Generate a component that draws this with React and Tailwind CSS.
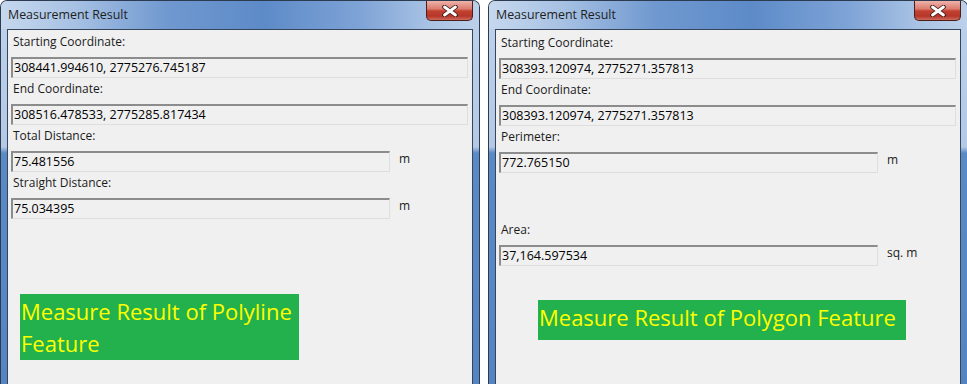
import React from 'react';

const FONT = "font-['Open_Sans',sans-serif]";

function CloseButton() {
    return (
        <div className="absolute top-0 right-[6px] w-[47px] h-[20px] rounded-b-[5px] border border-t-0 border-[#4a1f1a] bg-[linear-gradient(to_bottom,#eeb3ab_0%,#dc7b6d_42%,#c2412f_52%,#b5372a_80%,#d06a5c_100%)] flex items-center justify-center">
            <svg width="16" height="12" viewBox="0 0 16 12">
                <path d="M2.5 2 L13.5 10 M13.5 2 L2.5 10" stroke="#3b1a16" strokeWidth="4.6" strokeLinecap="round" />
                <path d="M2.5 2 L13.5 10 M13.5 2 L2.5 10" stroke="#ffffff" strokeWidth="2.8" strokeLinecap="round" />
            </svg>
        </div>
    );
}

function Field({ label, value, unit, className = '' }) {
    return (
        <div className={className}>
            <div className="h-[22px] flex items-center pl-[5px] text-[12px] text-[#1b1b1b]">{label}</div>
            <div className="mt-[4px] flex items-start">
                <div
                    className={`h-[21px] ml-[3px] border-t-2 border-l-2 border-b border-r border-t-[#8c8c8c] border-l-[#8c8c8c] border-b-[#dedede] border-r-[#dedede] bg-[#f0f0f0] flex items-center pl-[1px] text-[12.5px] text-black ${unit ? 'w-[379px]' : 'w-[457px]'}`}
                >
                    {value}
                </div>
                {unit && <span className="ml-[9px] text-[12px] leading-[16px] text-[#1b1b1b]">{unit}</span>}
            </div>
        </div>
    );
}

function Window({ children }) {
    return (
        <div className={`relative w-[480px] h-[384px] shrink-0 flex flex-col rounded-t-[7px] border border-b-0 border-[#2c3b50] bg-[linear-gradient(to_bottom,#bdd1ea_0px,#b3c9e6_146px,#5a8ac6_152px,#5584c2_100%)] ${FONT}`}>
            {/* Title bar */}
            <div className="h-[28px] shrink-0 rounded-t-[6px] flex items-center pl-[7px] text-[12.4px] text-[#1e1e1e] bg-[linear-gradient(to_right,#c6d8ee_0%,#a8c2e4_15%,#6f98cf_35%,#5d8bc8_55%,#7ea3d6_75%,#a9c3e4_90%,#bcd0ea_100%)]">
                Measurement Result
            </div>
            <CloseButton />
            {/* Content panel */}
            <div className="flex-1 mx-[6px] border border-b-0 border-[#34455c] bg-[#f0f0f0] pt-[1px]">
                {children}
            </div>
        </div>
    );
}

export default function App() {
    return (
        <div className="w-[967px] h-[384px] overflow-hidden bg-white flex gap-[8px]">
            <Window>
                <Field label="Starting Coordinate:" value="308441.994610, 2775276.745187" />
                <Field label="End Coordinate:" value="308516.478533, 2775285.817434" />
                <Field label="Total Distance:" value="75.481556" unit="m" />
                <Field label="Straight Distance:" value="75.034395" unit="m" />
                <div className="mt-[75px] ml-[12px] w-[279px] h-[66px] bg-[#22b14c] pt-[1px] pl-[1px] text-[22px] leading-[32px] text-[#ffff00]">
                    Measure Result of Polyline<br />Feature
                </div>
            </Window>
            <Window>
                <Field label="Starting Coordinate:" value="308393.120974, 2775271.357813" className="mt-[1px]" />
                <Field label="End Coordinate:" value="308393.120974, 2775271.357813" />
                <Field label="Perimeter:" value="772.765150" unit="m" />
                <Field label="Area:" value="37,164.597534" unit="sq. m" className="mt-[46px]" />
                <div className="mt-[34px] ml-[42px] w-[368px] h-[40px] bg-[#22b14c] pl-[1px] text-[22px] leading-[34px] text-[#ffff00]">
                    Measure Result of Polygon Feature
                </div>
            </Window>
        </div>
    );
}
